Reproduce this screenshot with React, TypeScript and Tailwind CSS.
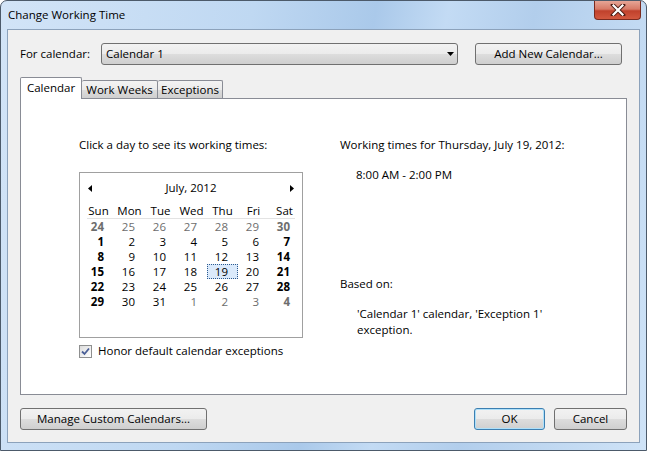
import React from 'react';

const btn =
  'flex items-center justify-center rounded-[3px] border border-[#707070] bg-[linear-gradient(#f2f2f2,#ebebeb_50%,#dddddd_50%,#cfcfcf)] text-black';

const ChangeWorkingTime: React.FC = () => {
  const days = Array.from({ length: 42 }, (_, i) => {
    if (i < 7) return { d: 24 + i, other: true };
    const n = i - 6;
    return n <= 31 ? { d: n, other: false } : { d: n - 31, other: true };
  });
  const heads = ['Sun', 'Mon', 'Tue', 'Wed', 'Thu', 'Fri', 'Sat'];

  return (
    <div
      className="relative w-[647px] h-[451px] overflow-hidden rounded-t-[7px] border border-[#4c5a6a] bg-[linear-gradient(100deg,#d2e4f7_0%,#bfd8f2_35%,#aac9ea_52%,#c3dbf4_62%,#b2ceec_74%,#cfe3f7_100%)] text-[11.5px] text-black"
      style={{ fontFamily: '"Segoe UI", "Open Sans", "Noto Sans", sans-serif' }}
    >
      {/* title bar */}
      <div className="h-[28px] flex items-center pl-[7px] text-[11.5px] text-black">Change Working Time</div>
      <div className="absolute top-0 right-[5px] w-[47px] h-[19px] rounded-b-[4px] border border-t-0 border-[#7a2a1f] bg-[linear-gradient(#e6a596,#d77a67_45%,#c0412c_55%,#d2583f)] flex items-center justify-center">
        <svg width="16" height="12" viewBox="0 0 16 12">
          <path d="M3 1 L13 11 M13 1 L3 11" stroke="#4a1a12" strokeWidth="4" strokeLinecap="square" />
          <path d="M3.5 1.5 L12.5 10.5 M12.5 1.5 L3.5 10.5" stroke="#ffffff" strokeWidth="2.2" strokeLinecap="square" />
        </svg>
      </div>

      {/* client area */}
      <div className="mx-[6px] h-[414px] border border-[#8ca2bb] bg-[#f0f0f0] flex flex-col pl-[12px] pt-[13px]">
        <div className="flex items-center h-[22px]">
          <div className="w-[81px]">For calendar:</div>
          <div className={`${btn} w-[357px] h-[22px] !justify-between pl-[4px] pr-[3px]`}>
            <span>Calendar 1</span>
            <svg width="7" height="4" viewBox="0 0 7 4">
              <polygon points="0,0 7,0 3.5,4" fill="#000" />
            </svg>
          </div>
          <div className={`${btn} ml-[17px] w-[147px] h-[22px]`}>Add New Calendar...</div>
        </div>

        {/* tabs */}
        <div className="mt-[12px] flex items-end h-[21px] relative z-10">
          <div className="w-[62px] h-[22px] -mb-[1px] bg-white border border-b-0 border-[#898c95] rounded-t-[2px] flex items-center justify-center pb-[2px]">
            Calendar
          </div>
          <div className="w-[76px] h-[18px] border border-l-0 border-b-0 border-[#898c95] rounded-t-[2px] bg-[linear-gradient(#f3f3f3,#ebebeb_50%,#dddddd_50%,#cfcfcf)] flex items-center justify-center pt-[1px]">
            Work Weeks
          </div>
          <div className="w-[65px] h-[18px] border border-l-0 border-b-0 border-[#898c95] rounded-t-[2px] bg-[linear-gradient(#f3f3f3,#ebebeb_50%,#dddddd_50%,#cfcfcf)] flex items-center justify-center pt-[1px]">
            Exceptions
          </div>
        </div>

        {/* tab panel */}
        <div className="w-[607px] h-[297px] bg-white border border-[#898c95] flex">
          <div className="ml-[58px] w-[224px] pt-[38px] flex flex-col">
            <div className="h-[16px] leading-[16px]">Click a day to see its working times:</div>
            <div className="mt-[19px] h-[166px] border border-[#a0a0a0] flex flex-col pt-[7px]">
              <div className="h-[16px] flex items-center justify-between px-[8px]">
                <svg width="4" height="7" viewBox="0 0 4 7">
                  <polygon points="4,0 4,7 0,3.5" fill="#000" />
                </svg>
                <span className="leading-[16px]">July, 2012</span>
                <svg width="4" height="7" viewBox="0 0 4 7">
                  <polygon points="0,0 0,7 4,3.5" fill="#000" />
                </svg>
              </div>
              <div className="mt-[7px] mx-[3px] grid grid-cols-7 w-[217px]">
                {heads.map((h) => (
                  <div key={h} className="h-[15px] leading-[15px] text-center">
                    {h}
                  </div>
                ))}
              </div>
              <div className="mx-[7px] h-px bg-[#e3e3e3]" />
              <div className="mx-[3px] grid grid-cols-7 w-[217px]">
                {days.map((c, i) => {
                  const wkend = i % 7 === 0 || i % 7 === 6;
                  const sel = !c.other && c.d === 19;
                  return (
                    <div
                      key={i}
                      className={`h-[15px] leading-[15px] text-right pr-[10px] ${
                        sel ? 'outline-1 outline-dotted -outline-offset-1 outline-[#2c5a8f] bg-[#dbeafb]' : ''
                      } ${c.other ? 'text-[#6d6d6d]' : 'text-black'} ${wkend ? 'font-bold' : ''}`}
                    >
                      {c.d}
                    </div>
                  );
                })}
              </div>
            </div>
            <div className="mt-[5px] h-[16px] flex items-center">
              <div className="w-[13px] h-[13px] border border-[#8e8f8f] bg-[linear-gradient(135deg,#dcdcdc,#ffffff)] flex items-center justify-center">
                <svg width="9" height="9" viewBox="0 0 9 9">
                  <path d="M1 4.5 L3.5 7 L8 1.5" stroke="#4a5f97" strokeWidth="1.8" fill="none" />
                </svg>
              </div>
              <span className="ml-[6px]">Honor default calendar exceptions</span>
            </div>
          </div>

          <div className="ml-[37px] pt-[38px] flex flex-col">
            <div className="h-[16px] leading-[16px]">Working times for Thursday, July 19, 2012:</div>
            <div className="mt-[14px] pl-[16px] h-[16px] leading-[16px]">8:00 AM - 2:00 PM</div>
            <div className="mt-[93px] h-[16px] leading-[16px]">Based on:</div>
            <div className="mt-[14px] pl-[17px] w-[220px] leading-[16px]">
              'Calendar 1' calendar, 'Exception 1' exception.
            </div>
          </div>
        </div>

        {/* bottom buttons */}
        <div className="mt-[13px] flex h-[22px]">
          <div className={`${btn} w-[187px] h-[22px]`}>Manage Custom Calendars...</div>
          <div className={`${btn} ml-auto w-[71px] h-[22px] !border-[#3c7fb1] shadow-[inset_0_0_0_1px_#aee0fa]`}>OK</div>
          <div className={`${btn} ml-[9px] mr-[12px] w-[73px] h-[22px]`}>Cancel</div>
        </div>
      </div>
    </div>
  );
};

export default function App() {
  return <ChangeWorkingTime />;
}
